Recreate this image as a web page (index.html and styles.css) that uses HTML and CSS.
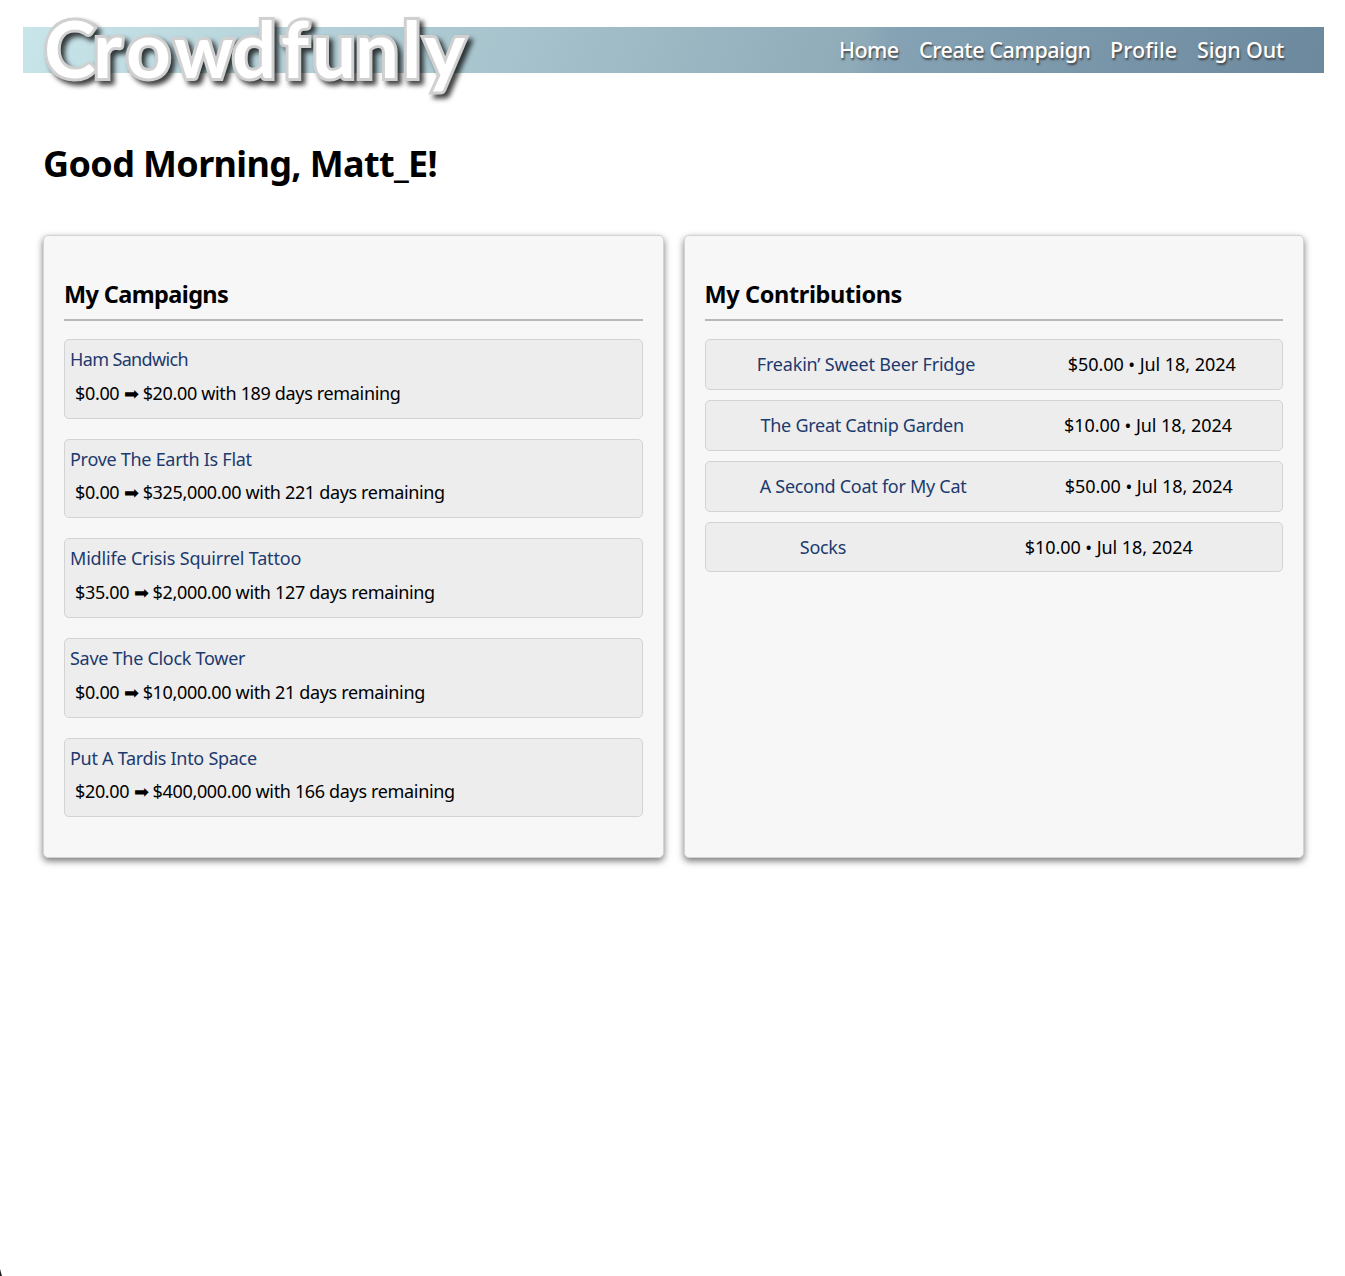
FILE: index.html
```html
<!DOCTYPE html>
<html lang="en">
<head>
<meta charset="utf-8">
<title>Crowdfunly</title>
<link rel="stylesheet" href="styles.css">
</head>
<body>
<header class="site-header">
  <a class="logo" aria-label="Crowdfunly">
    <svg class="logo-art" width="450" height="110" viewBox="0 0 450 110">
      <text class="logo-text" y="82.500" x="21 70 103 151 209 258 289 332 379 401">Cro<tspan class="logo-w">w</tspan>dfunly</text>
    </svg>
  </a>
  <nav class="nav">
    <a class="nav-home">Home</a>
    <a class="nav-create">Create Campaign</a>
    <a class="nav-profile">Profile</a>
    <a class="nav-signout">Sign Out</a>
  </nav>
</header>
<main class="page">
  <h1 class="greeting">Good Morning, Matt_E!</h1>
  <div class="cards">
    <section class="card">
      <h2 class="card-title">My Campaigns</h2>
      <ul class="campaigns">
        <li class="campaign"><a class="link link-tight">Ham Sandwich</a><p class="progress">$0.00 ➡ $20.00 with 189 days remaining</p></li>
        <li class="campaign"><a class="link">Prove The Earth Is Flat</a><p class="progress">$0.00 ➡ $325,000.00 with 221 days remaining</p></li>
        <li class="campaign"><a class="link link-loose">Midlife Crisis Squirrel Tattoo</a><p class="progress">$35.00 ➡ $2,000.00 with 127 days remaining</p></li>
        <li class="campaign"><a class="link">Save The Clock Tower</a><p class="progress">$0.00 ➡ $10,000.00 with 21 days remaining</p></li>
        <li class="campaign"><a class="link">Put A Tardis Into Space</a><p class="progress">$20.00 ➡ $400,000.00 with 166 days remaining</p></li>
      </ul>
    </section>
    <section class="card">
      <h2 class="card-title card-title-wide">My Contributions</h2>
      <ul class="contributions">
        <li class="contribution"><a class="link link-loose">Freakin’ Sweet Beer Fridge</a><span class="amount">$50.00 • Jul 18, 2024</span></li>
        <li class="contribution"><a class="link">The Great Catnip Garden</a><span class="amount">$10.00 • Jul 18, 2024</span></li>
        <li class="contribution"><a class="link">A Second Coat for My Cat</a><span class="amount">$50.00 • Jul 18, 2024</span></li>
        <li class="contribution"><a class="link">Socks</a><span class="amount">$10.00 • Jul 18, 2024</span></li>
      </ul>
    </section>
  </div>
</main>
<div class="corner"></div>
</body>
</html>
```
FILE: styles.css
```css
* { box-sizing: border-box; }
body {
  margin: 0;
  min-height: 100vh;
  padding: 27px 21px 0 23px;
  background: #fff;
  color: #000;
  font-family: "Noto Sans", sans-serif;
  font-size: 18px;
}
.site-header {
  display: flex;
  align-items: center;
  justify-content: space-between;
  height: 46px;
  padding-right: 40px;
  background: linear-gradient(110deg, #c8e5ea, #8fabb8 64%, #86a3b5 66%, #6c889d);
}
.logo-art { display: block; overflow: visible; }
.logo-text {
  font-family: Lato, sans-serif;
  font-weight: 700;
  font-size: 78px;
  fill: #fff;
  stroke: #d0d0d0;
  stroke-width: 6px;
  paint-order: stroke;
  filter: drop-shadow(4px 4px 2.5px rgba(0, 0, 0, .75));
}
.logo-w { font-size: 74px; }
.nav {
  display: flex;
  gap: 20px;
  margin-top: -2px;
  color: #fff;
  font-size: 21.5px;
  font-weight: 500;
  text-shadow: 1px 2px 2px #444;
}
.nav-home { width: 60px; letter-spacing: -.6px; }
.nav-create { width: 171px; letter-spacing: -.4px; white-space: nowrap; }
.nav-profile { width: 67px; letter-spacing: .1px; }
.nav-signout { width: 87px; letter-spacing: -.2px; white-space: nowrap; }
.page { padding: 0 20px; }
.greeting {
  margin: 65px 0 45px;
  font-size: 36px;
  line-height: 52px;
  letter-spacing: -.64px;
}
.cards { display: grid; grid-template-columns: 1fr 1fr; gap: 20px; }
.card {
  height: 623px;
  padding: 39px 20px 20px;
  border: 1px solid #d3d3d3;
  border-radius: 5px;
  background: #f7f7f7;
  box-shadow: 0 3px 7px #777;
}
.card-title {
  margin: 0 0 18px;
  height: 46px;
  border-bottom: 2px solid #b8bab9;
  font-size: 23.5px;
  line-height: 38px;
  letter-spacing: -.62px;
}
.card-title-wide { letter-spacing: -.38px; }
.campaigns, .contributions {
  display: flex;
  flex-direction: column;
  margin: 0;
  padding: 0;
  list-style: none;
}
.campaigns { gap: 20px; }
.contributions { gap: 10px; }
.campaign, .contribution {
  border: 1px solid #d3d3d3;
  border-radius: 5px;
  background: #ededed;
}
.campaign { height: 79.7px; padding: 7px 5px 5px; }
.contribution {
  display: flex;
  align-items: center;
  justify-content: space-around;
  height: 50.85px;
  padding-left: 5px;
}
.link { color: #1c3a6e; letter-spacing: -.28px; }
.link-tight { letter-spacing: -.64px; }
.link-loose { letter-spacing: -.18px; }
.progress { margin: 9.500px 5px 0; letter-spacing: -.34px; }
.amount { letter-spacing: -.05px; }
.corner {
  position: fixed;
  left: 0;
  bottom: 0;
  width: 2px;
  height: 7px;
  background: #222;
  clip-path: polygon(0 0, 100% 100%, 0 100%);
}
```
